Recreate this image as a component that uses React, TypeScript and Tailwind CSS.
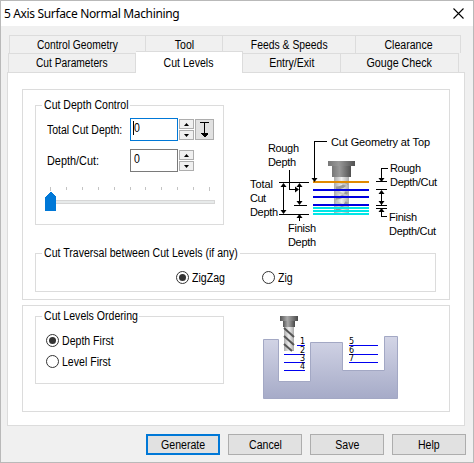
import React, { useState } from "react";

const frame = "border border-[#dcdcdc]";

function Label({ children, className = "origin-left scale-x-[.845]" }: { children: React.ReactNode; className?: string }) {
  return <span className={`inline-block whitespace-nowrap ${className}`}>{children}</span>;
}

function Group({
  title,
  titleWidth,
  className,
  children,
}: {
  title: string;
  titleWidth: string;
  className: string;
  children?: React.ReactNode;
}) {
  return (
    <section className={`${frame} ${className}`}>
      <h2 className={`-mt-[9px] ml-[6px] flex h-[16px] items-center bg-white pl-[2px] ${titleWidth}`}>
        <Label>{title}</Label>
      </h2>
      {children}
    </section>
  );
}

function Tab({ label, className, fit = "scale-x-[.845]" }: { label: string; className: string; fit?: string }) {
  return (
    <button className={`flex items-center justify-center border-t border-r border-[#dcdcdc] ${className}`}>
      <Label className={fit}>{label}</Label>
    </button>
  );
}

function Spinner() {
  return (
    <div className="ml-px flex h-[21px] w-[15px] shrink-0 flex-col gap-px">
      {["0,3 5,3 2.5,0", "0,0 5,0 2.5,3"].map((points) => (
        <button key={points} className="flex h-[10px] w-[15px] items-center justify-center border border-[#adadad] bg-[#f0f0f0]">
          <svg width="5" height="3">
            <polygon points={points} />
          </svg>
        </button>
      ))}
    </div>
  );
}

function Radio({ label, checked, onSelect }: { label: string; checked: boolean; onSelect: () => void }) {
  return (
    <button onClick={onSelect} className="flex h-[15px] items-center gap-[3px]">
      <svg width="13" height="13">
        <circle cx="6.5" cy="6.5" r="6" fill="#fff" stroke="#333" />
        {checked && <circle cx="6.5" cy="6.5" r="3.5" fill="#333" />}
      </svg>
      <Label>{label}</Label>
    </button>
  );
}

function Cutter({ x, y }: { x: number; y: number }) {
  return (
    <g transform={`translate(${x} ${y})`}>
      <rect x="4" y="10" width="10" height="25" fill="url(#shaft)" />
      <path d="M4 12l10 9M4 20l10 9M4 28l8 7" stroke="#555" strokeWidth="2" />
      <rect x="3" y="5" width="12" height="6" fill="url(#steel)" />
      <rect width="18" height="5" fill="url(#steel)" />
    </g>
  );
}

function DepthDiagram() {
  return (
    <svg width="205" height="122" viewBox="240 130 205 122" fontFamily="'Liberation Sans', Arial, sans-serif" fontSize="11">
      <defs>
        <linearGradient id="steel">
          <stop offset="0" stopColor="#555" />
          <stop offset=".4" stopColor="#aaa" />
          <stop offset="1" stopColor="#484848" />
        </linearGradient>
        <linearGradient id="shaft">
          <stop offset="0" stopColor="#aaa" />
          <stop offset=".5" stopColor="#eee" />
          <stop offset="1" stopColor="#aaa" />
        </linearGradient>
        <linearGradient id="holder">
          <stop offset="0" stopColor="#777" />
          <stop offset=".4" stopColor="#999" />
          <stop offset="1" stopColor="#505050" />
        </linearGradient>
      </defs>
      <rect x="334" y="176" width="15" height="37" fill="url(#shaft)" />
      <path d="M336 188q7 0 11-5M336 198q7 0 11-6M336 209q7 0 11-7" stroke="#999" strokeWidth="3" fill="none" />
      <path d="M336 181l11 4M336 191l11 5M336 202l11 5" stroke="#c4c4c4" strokeWidth="2" />
      <rect x="332" y="165" width="19" height="12" fill="url(#holder)" />
      <rect x="328" y="161" width="27" height="5" fill="url(#holder)" />
      <g shapeRendering="crispEdges">
        <rect x="313" y="181" width="56" height="2" fill="#e08a00" />
        <path d="M313 190h56M313 197h56M313 205h56" stroke="#0000e0" strokeWidth="2" />
        <path d="M313 208h56M313 211h56M313 214h56" stroke="#00e6e6" strokeWidth="2" />
      </g>
      <g fill="none" stroke="#000" shapeRendering="crispEdges">
        <path d="M327 141.5H314.5V181M289.5 170V189.5H296M279 182.5H309M294 205.5H307M279 214.5H309M283.5 184V213M299.5 184V204M299.5 216V221" />
        <path d="M388 168.5H381.5V181M376 181.5H387M376 189.5H387M381.5 191V205M376 205.5H387M376 208.5H387M381.5 209V216.5H387" />
      </g>
      <path d="M311.5 178h6l-3 4zM295 186.5v6l4-3zM280.5 187h6l-3-4zM280.5 210h6l-3 4zM296.5 187h6l-3-4zM296.5 201h6l-3 4zM296.5 218h6l-3-4zM378.5 178h6l-3 4zM378.5 194h6l-3-4zM378.5 201h6l-3 4zM378.5 212h6l-3-4z" />
      <text x="331" y="146" textLength="99">Cut Geometry at Top</text>
      <text x="268" y="152" textLength="31">Rough</text>
      <text x="268" y="166" textLength="28">Depth</text>
      <text x="250" y="188" textLength="23">Total</text>
      <text x="250" y="202" textLength="16">Cut</text>
      <text x="250" y="216" textLength="28">Depth</text>
      <text x="288" y="232" textLength="28">Finish</text>
      <text x="288" y="246" textLength="28">Depth</text>
      <text x="390" y="172" textLength="31">Rough</text>
      <text x="390" y="186" textLength="47">Depth/Cut</text>
      <text x="389" y="221" textLength="28">Finish</text>
      <text x="389" y="235" textLength="47">Depth/Cut</text>
    </svg>
  );
}

function OrderDiagram() {
  return (
    <svg width="136" height="86" viewBox="263 314 136 86" fontFamily="'DejaVu Sans', sans-serif" fontSize="8">
      <defs>
        <linearGradient id="block" x1="0" y1="0" x2="0" y2="1">
          <stop offset="0" stopColor="#d3d5e6" />
          <stop offset="1" stopColor="#a6abc8" />
        </linearGradient>
      </defs>
      <path
        d="M263.5 339.5H278.5V381.5H310.5V342.5H342.5V370.5H384.5V336.5H397.5V398.5H263.5Z"
        fill="url(#block)"
        stroke="#a3a8c4"
      />
      <Cutter x={280} y={316} />
      <path
        d="M297 345.5H305M284 354.5H305M284 362.5H305M284 370.5H305M349 345.5H378M349 354.5H378M349 362.5H378"
        stroke="#0000f0"
        shapeRendering="crispEdges"
      />
      <text x="300" y="344">1</text>
      <text x="300" y="353">2</text>
      <text x="300" y="361">3</text>
      <text x="300" y="369">4</text>
      <text x="349" y="344">5</text>
      <text x="349" y="353">6</text>
      <text x="349" y="361">7</text>
    </svg>
  );
}

export default function App() {
  const [traversal, setTraversal] = useState("ZigZag");
  const [order, setOrder] = useState("Depth First");
  return (
    <div className="flex h-[463px] w-[474px] flex-col border border-[#b9b9b9] bg-[#f0f0f0] font-['Liberation_Sans',Arial,sans-serif] text-[12.5px] leading-[14px] text-black">
      <header className="flex h-[25px] shrink-0 items-center justify-between bg-white pr-[9px] pl-[3px]">
        <h1 className="font-['Noto_Sans',sans-serif] text-[12px] tracking-[-0.35px]">5 Axis Surface Normal Machining</h1>
        <svg width="11" height="11" stroke="#000" strokeWidth="1.1">
          <path d="M.5 .5l10 10M10.5 .5l-10 10" />
        </svg>
      </header>

      <nav className="mt-[9px] ml-[8px] flex h-[18px] w-[452px] shrink-0 border-l border-[#dcdcdc]">
        <Tab label="Control Geometry" className="w-[136px]" fit="scale-x-[.82]" />
        <Tab label="Tool" className="w-[77px]" />
        <Tab label="Feeds & Speeds" className="w-[133px]" fit="scale-x-[.83]" />
        <Tab label="Clearance" className="w-[105px]" />
      </nav>
      <nav className="ml-[7px] flex h-[19px] w-[451px] shrink-0 items-end border-l border-[#dcdcdc]">
        <Tab label="Cut Parameters" className="h-[19px] w-[127px]" fit="scale-x-[.82]" />
        <Tab label="Cut Levels" className="z-10 -mb-px h-[22px] w-[107px] bg-white" />
        <Tab label="Entry/Exit" className="h-[19px] w-[98px]" />
        <Tab label="Gouge Check" className="h-[19px] w-[118px]" fit="scale-x-[.857]" />
      </nav>

      <main className={`ml-[6px] h-[354px] w-[458px] shrink-0 bg-white px-[14px] pt-[16px] ${frame}`}>
        <div className={`h-[211px] w-[428px] px-[12px] pt-[15px] ${frame}`}>
          <div className="flex h-[120px]">
            <Group title="Cut Depth Control" titleWidth="w-[88px]" className="h-[120px] w-[189px] shrink-0">
              <div className="mt-[5px] ml-[11px] flex h-[23px] items-center">
                <div className="w-[83px] shrink-0">
                  <Label className="origin-left scale-x-[.84]">Total Cut Depth:</Label>
                </div>
                <div className="flex h-[23px] w-[48px] shrink-0 items-start border border-[#0078d7] pt-[2px] pl-[2px]">
                  <span className="h-[14px] w-px bg-black" />
                  <Label>0</Label>
                </div>
                <Spinner />
                <button className="ml-px flex h-[21px] w-[19px] shrink-0 items-center justify-center border border-[#adadad] bg-[#e1e1e1]">
                  <svg width="9" height="15" shapeRendering="crispEdges">
                    <path d="M0 .5h9M4.5 1v13" stroke="#000" />
                    <path d="M1 11h7v1L5 15H4L1 12z" />
                  </svg>
                </button>
              </div>
              <div className="mt-[8px] ml-[11px] flex h-[23px] items-center">
                <div className="w-[83px] shrink-0">
                  <Label className="origin-left scale-x-[.87]">Depth/Cut:</Label>
                </div>
                <div className="flex h-[23px] w-[48px] items-start border border-[#7a7a7a] pt-[2px] pl-[3px]">
                  <Label>0</Label>
                </div>
                <Spinner />
              </div>
              <svg className="mt-[15px] ml-[9px]" width="171" height="24" shapeRendering="crispEdges">
                {Array.from({ length: 11 }, (_, i) => (
                  <rect key={i} x={Math.round(5 + i * 15.9)} y="0" width="1" height={i % 10 ? 3 : 4} fill="#c4c4c4" />
                ))}
                <rect x=".5" y="13.5" width="169" height="3" fill="#e7eaea" stroke="#d6d6d6" />
                <path d="M0 24V10l5.5-5.5L11 10v14z" fill="#0078d7" />
              </svg>
            </Group>
            <div className="mt-[25px] ml-[16px]">
              <DepthDiagram />
            </div>
          </div>
          <Group
            title="Cut Traversal between Cut Levels (if any)"
            titleWidth="w-[198px]"
            className="mt-[28px] h-[39px] w-[401px]"
          >
            <div className="mt-[9px] ml-[140px] flex">
              <div className="w-[86px]">
                <Radio label="ZigZag" checked={traversal === "ZigZag"} onSelect={() => setTraversal("ZigZag")} />
              </div>
              <Radio label="Zig" checked={traversal === "Zig"} onSelect={() => setTraversal("Zig")} />
            </div>
          </Group>
        </div>

        <div className={`mt-[5px] flex h-[107px] w-[428px] pt-[10px] pl-[12px] ${frame}`}>
          <Group title="Cut Levels Ordering" titleWidth="w-[97px]" className="h-[68px] w-[189px] shrink-0">
            <div className="mt-[9px] ml-[10px] flex flex-col gap-[6px]">
              {["Depth First", "Level First"].map((label) => (
                <Radio key={label} label={label} checked={order === label} onSelect={() => setOrder(label)} />
              ))}
            </div>
          </Group>
          <div className="-mt-[2px] ml-[39px]">
            <OrderDiagram />
          </div>
        </div>
      </main>

      <footer className="mt-[8px] ml-[145px] flex gap-[8px]">
        <button className="flex h-[21px] w-[74px] items-center justify-center border-2 border-[#0078d7] bg-[#e1e1e1]">
          <Label className="scale-x-[.845]">Generate</Label>
        </button>
        {["Cancel", "Save", "Help"].map((label) => (
          <button
            key={label}
            className="flex h-[21px] w-[74px] items-center justify-center border border-[#adadad] bg-[#e1e1e1]"
          >
            <Label className="scale-x-[.845]">{label}</Label>
          </button>
        ))}
      </footer>
    </div>
  );
}
